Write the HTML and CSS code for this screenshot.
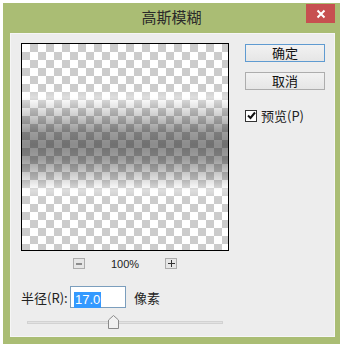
FILE: index.html
```html
<!DOCTYPE html>
<html lang="zh-CN">
<head>
  <meta charset="UTF-8" />
  <title>高斯模糊</title>
  <link rel="stylesheet" href="styles.css">
</head>
<body>
  <div class="window">
    <!-- Title bar -->
    <div class="titlebar">
      <span></span>
      <span class="title">高斯模糊</span>
      <button class="close-btn" aria-label="关闭">
        <svg width="10" height="10" viewBox="0 0 10 10">
          <path d="M1.5 1.5 L8.5 8.5 M8.5 1.5 L1.5 8.5" stroke="#fff" stroke-width="2" fill="none"/>
        </svg>
      </button>
    </div>

    <div class="content">
      <div class="left-col">
        <div class="preview"></div>

        <div class="zoom-row">
          <span class="zoom-btn">
            <svg width="6" height="2" viewBox="0 0 6 2"><rect width="6" height="1" y="0.5" fill="#333"/></svg>
          </span>
          <span class="zoom-value">100%</span>
          <span class="zoom-btn">
            <svg width="7" height="7" viewBox="0 0 7 7"><path d="M0 3.5 H7 M3.5 0 V7" stroke="#333" stroke-width="1" fill="none"/></svg>
          </span>
        </div>

        <div class="radius-row">
          <label>半径(R):</label>
          <div class="radius-input"><span class="selected">17.0</span></div>
          <span class="unit">像素</span>
        </div>

        <div class="slider">
          <div class="track"></div>
          <svg class="thumb" width="11" height="14" viewBox="0 0 11 14">
            <path d="M0.5 13.5 V5 L5.5 0.5 L10.5 5 V13.5 Z" fill="#f1f1f1" stroke="#8a8a8a" stroke-width="1"/>
          </svg>
        </div>
      </div>

      <div class="right-col">
        <button class="btn default">确定</button>
        <button class="btn">取消</button>
        <div class="check-row">
          <span class="checkbox">
            <svg width="9" height="9" viewBox="0 0 9 9"><path d="M1 4.5 L3.5 7 L8 1.5" stroke="#111" stroke-width="2" fill="none"/></svg>
          </span>
          <span class="check-label">预览(P)</span>
        </div>
      </div>
    </div>
  </div>
</body>
</html>
```

FILE: styles.css
```css
* {
  box-sizing: border-box;
  margin: 0;
  padding: 0;
}
body {
  background-color: #fff;
  font-family: "Noto Sans CJK SC", "Liberation Sans", sans-serif;
  font-size: 13px;
  color: #222;
}
.window {
  margin: 3px 0 0 3px;
  width: 337px;
  height: 341px;
  background-color: #aabd74;
  display: flex;
  flex-direction: column;
}
.titlebar {
  height: 30px;
  display: grid;
  grid-template-columns: 1fr auto 1fr;
}
.title {
  font-size: 15px;
  line-height: 28px;
  color: #2a2a2a;
}
.close-btn {
  justify-self: end;
  margin: 1px 5px 0 0;
  width: 29px;
  height: 19px;
  border: none;
  background-color: #c75050;
  display: flex;
  align-items: center;
  justify-content: center;
}
.content {
  flex: 1;
  margin: 0 5px 7px 7px;
  background-color: #ededed;
  border: 1px solid #f6f6f6;
  padding: 9px 0 0 10px;
  display: flex;
}
.left-col {
  width: 208px;
  display: flex;
  flex-direction: column;
}
.preview {
  width: 208px;
  height: 208px;
  border: 1px solid #000;
  background:
    linear-gradient(to bottom,
      rgba(0, 0, 0, 0) 0%,
      rgba(0, 0, 0, 0) 22%,
      rgba(255, 255, 255, 0.35) 26%,
      rgba(0, 0, 0, 0.15) 33%,
      rgba(0, 0, 0, 0.38) 42%,
      rgba(0, 0, 0, 0.45) 49%,
      rgba(0, 0, 0, 0.38) 56%,
      rgba(0, 0, 0, 0.15) 65%,
      rgba(255, 255, 255, 0.35) 71%,
      rgba(0, 0, 0, 0) 75%,
      rgba(0, 0, 0, 0) 100%),
    repeating-conic-gradient(#cccccc 0 25%, #ffffff 0 50%) 0 0 / 16px 16px;
}
.zoom-row {
  margin-top: 7px;
  height: 11px;
  display: flex;
  align-items: center;
  justify-content: center;
  gap: 26px;
}
.zoom-btn {
  width: 12px;
  height: 11px;
  border: 1px solid #acacac;
  background-color: #e6e6e6;
  display: flex;
  align-items: center;
  justify-content: center;
}
.zoom-value {
  font-family: "Liberation Sans", sans-serif;
  font-size: 11px;
  color: #222;
}
.radius-row {
  margin-top: 17px;
  height: 22px;
  display: flex;
  align-items: center;
}
.radius-row label {
  width: 49px;
}
.radius-input {
  width: 56px;
  height: 22px;
  border: 1px solid #7b9ebd;
  background-color: #fff;
  padding: 2px 0 0 3px;
}
.selected {
  display: inline-block;
  font-family: "Liberation Sans", sans-serif;
  font-size: 13px;
  line-height: 16px;
  padding: 0 1px;
  background-color: #3399ff;
  color: #fff;
}
.unit {
  margin-left: 8px;
}
.slider {
  margin: 7px 0 0 6px;
  width: 196px;
  height: 14px;
  display: flex;
  align-items: center;
}
.track {
  width: 196px;
  height: 3px;
  background-color: #e2e2e2;
  border: 1px solid #d2d2d2;
}
.thumb {
  margin-left: -115px;
}
.right-col {
  margin-left: 16px;
  padding-top: 1px;
  display: flex;
  flex-direction: column;
  gap: 10px;
}
.btn {
  width: 80px;
  height: 18px;
  font-family: "Noto Sans CJK SC", sans-serif;
  font-size: 13px;
  line-height: 14px;
  color: #111;
  border: 1px solid #adadad;
  background: linear-gradient(#f2f2f2, #e6e6e6);
}
.btn.default {
  border-color: #5f9bd1;
}
.check-row {
  margin-top: 6px;
  display: flex;
  align-items: center;
  gap: 4px;
}
.checkbox {
  width: 12px;
  height: 12px;
  border: 1px solid #333;
  background-color: #fff;
  display: flex;
  align-items: center;
  justify-content: center;
}
```
